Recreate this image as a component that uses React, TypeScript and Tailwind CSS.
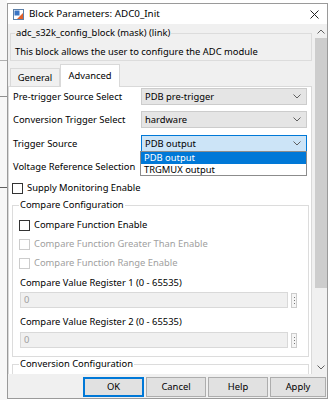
import React from "react";

const font = { fontFamily: '"Noto Sans", "Open Sans", sans-serif' };

function Checkbox({ label, disabled = false }: { label: string; disabled?: boolean }) {
  return (
    <div className="flex items-center h-[14px]">
      <span
        className={
          "w-[11px] h-[11px] border bg-white shrink-0 " +
          (disabled ? "border-[#cccccc]" : "border-[#333333]")
        }
      />
      <span className={"ml-[4px] whitespace-nowrap " + (disabled ? "text-[#a0a0a0]" : "text-black")}>{label}</span>
    </div>
  );
}

function Chevron({ className = "" }: { className?: string }) {
  return (
    <svg width="8" height="5" viewBox="0 0 8 5" className={className}>
      <path d="M0.5 0.5 L4 4 L7.5 0.5" fill="none" stroke="#606060" strokeWidth="1" />
    </svg>
  );
}

function Select({ value, active = false }: { value?: string; active?: boolean }) {
  return (
    <div
      className={
        "w-[166px] h-[17px] flex items-center justify-between pl-[3px] pr-[5px] border " +
        (active ? "bg-[#cce4f7] border-[#0078d7]" : "bg-[#e5e5e5] border-[#cccccc]")
      }
    >
      <span className="whitespace-nowrap">{value}</span>
      <Chevron />
    </div>
  );
}

function ParamRow({ label, children }: { label: string; children?: React.ReactNode }) {
  return (
    <div className="flex items-center h-[17px] pl-[4px]">
      <span className="w-[128px] shrink-0 whitespace-nowrap">{label}</span>
      {children}
    </div>
  );
}

function NumberField() {
  return (
    <div className="flex items-center ml-[1px]">
      <div className="w-[268px] h-[16px] bg-[#f0f0f0] border border-[#d9d9d9] flex items-center pl-[3px] text-[#a0a0a0]">
        0
      </div>
      <div className="ml-[3px] w-[6px] h-[15px] border border-[#cccccc] bg-[#f5f5f5] flex flex-col items-center justify-center gap-[2px]">
        <span className="w-[1px] h-[1px] bg-[#777777]" />
        <span className="w-[1px] h-[1px] bg-[#777777]" />
        <span className="w-[1px] h-[1px] bg-[#777777]" />
      </div>
    </div>
  );
}

function AppIcon() {
  return (
    <svg width="11" height="11" viewBox="0 0 11 11">
      <rect x="0.5" y="0.5" width="10" height="10" fill="#ffffff" stroke="#5b7fa8" />
      <rect x="1.5" y="1.5" width="5" height="5" fill="#3a74c4" />
      <path d="M4 10 L10 4 L10 10 Z" fill="#e2612a" />
    </svg>
  );
}

export default function App() {
  return (
    <div className="w-[328px] h-[400px] bg-white flex overflow-hidden text-[9.4px] leading-[14px] text-black" style={font}>
      {/* window behind the dialog */}
      <div className="w-[7px] shrink-0 bg-[#f7f7f7] flex flex-col">
        <div className="h-[60px]" />
        <div className="h-[1px] bg-[#b0b0b0]" />
        <div className="h-[35px]" />
        <div className="h-[1px] bg-[#909090]" />
        <div className="h-[90px]" />
        <div className="h-[1px] bg-[#606060]" />
      </div>

      <div className="flex-1 mt-[3px] mb-[1px] flex flex-col border border-[#9a9a9a] bg-[#f0f0f0]">
        {/* title bar */}
        <div className="h-[20px] bg-white flex items-center pl-[5px] pr-[8px] shrink-0">
          <AppIcon />
          <span className="ml-[5px] text-[9.8px]">Block Parameters: ADC0_Init</span>
          <svg width="9" height="9" viewBox="0 0 9 9" className="ml-auto">
            <path d="M0.5 0.5 L8.5 8.5 M8.5 0.5 L0.5 8.5" stroke="#222222" strokeWidth="1" />
          </svg>
        </div>

        {/* scrollable body */}
        <div className="flex h-[350px] shrink-0">
          <div className="w-[304px] flex flex-col">
            <fieldset className="mt-[2px] ml-[2px] w-[302px] h-[35px] border border-[#dcdcdc] pl-[4px]">
              <legend className="px-[1px]">adc_s32k_config_block (mask) (link)</legend>
              <div className="mt-[5px] whitespace-nowrap">This block allows the user to configure the ADC module</div>
            </fieldset>

            {/* tabs */}
            <div className="mt-[3px] ml-[2px] flex items-end h-[22px]">
              <div className="h-[18px] w-[50px] border border-b-0 border-[#d9d9d9] bg-[#f0f0f0] flex items-center justify-center">
                General
              </div>
              <div className="relative z-10 mb-[-1px] h-[23px] w-[60px] border border-b-0 border-[#d9d9d9] bg-white flex items-center justify-center">
                Advanced
              </div>
            </div>

            {/* tab panel */}
            <div className="relative flex-1 bg-white border border-[#d9d9d9] border-b-0 overflow-hidden">
              <div className="mt-[1px]">
                <ParamRow label="Pre-trigger Source Select">
                  <Select value="PDB pre-trigger" />
                </ParamRow>
              </div>
              <div className="mt-[6px]">
                <ParamRow label="Conversion Trigger Select">
                  <Select value="hardware" />
                </ParamRow>
              </div>
              <div className="mt-[7px]">
                <ParamRow label="Trigger Source">
                  <Select value="PDB output" active />
                </ParamRow>
              </div>
              <div className="mt-[6px]">
                {/* its select sits under the open list */}
                <ParamRow label="Voltage Reference Selection">
                  <Select />
                </ParamRow>
              </div>
              <div className="mt-[6px] pl-[3px]">
                <Checkbox label="Supply Monitoring Enable" />
              </div>

              <fieldset className="mt-[3px] ml-[3px] w-[297px] border border-[#dcdcdc] pl-[6px] pb-[8px]">
                <legend className="px-[1px]">Compare Configuration</legend>
                <div className="mt-[6px]">
                  <Checkbox label="Compare Function Enable" />
                </div>
                <div className="mt-[5px]">
                  <Checkbox label="Compare Function Greater Than Enable" disabled />
                </div>
                <div className="mt-[5px]">
                  <Checkbox label="Compare Function Range Enable" disabled />
                </div>
                <div className="mt-[6px] pl-[1px]">Compare Value Register 1 (0 - 65535)</div>
                <div className="mt-[2px]">
                  <NumberField />
                </div>
                <div className="mt-[7px] pl-[1px]">Compare Value Register 2 (0 - 65535)</div>
                <div className="mt-[3px]">
                  <NumberField />
                </div>
              </fieldset>

              <fieldset className="ml-[3px] w-[297px] h-[30px] border border-[#dcdcdc] pl-[6px]">
                <legend className="px-[1px]">Conversion Configuration</legend>
              </fieldset>

              {/* open dropdown list of Trigger Source */}
              <div className="absolute top-[64px] left-[131px] w-[167px] h-[25px] bg-white border border-[#8c8c8c] flex flex-col">
                <div className="h-[12px] bg-[#0078d7] text-white flex items-center pl-[3px]">PDB output</div>
                <div className="h-[12px] flex items-center pl-[3px]">TRGMUX output</div>
              </div>
            </div>
          </div>

          {/* scrollbar */}
          <div className="ml-[3px] w-[12px] flex flex-col bg-[#f0f0f0]">
            <div className="h-[14px] flex items-center justify-center">
              <Chevron className="rotate-180" />
            </div>
            <div className="h-[250px] bg-[#cdcdcd]" />
            <div className="flex-1" />
            <div className="h-[14px] flex items-center justify-center">
              <Chevron />
            </div>
          </div>
        </div>

        {/* buttons */}
        <div className="flex-1 flex justify-end items-start gap-[2px] pr-[1px] pt-[3px]">
          <button className="w-[61px] h-[20px] bg-[#e1e1e1] border-2 border-[#0078d7]">OK</button>
          <button className="w-[60px] h-[20px] bg-[#e1e1e1] border border-[#adadad]">Cancel</button>
          <button className="w-[60px] h-[20px] bg-[#e1e1e1] border border-[#adadad]">Help</button>
          <button className="w-[56px] h-[20px] bg-[#e1e1e1] border border-[#adadad]">Apply</button>
        </div>
      </div>
    </div>
  );
}
